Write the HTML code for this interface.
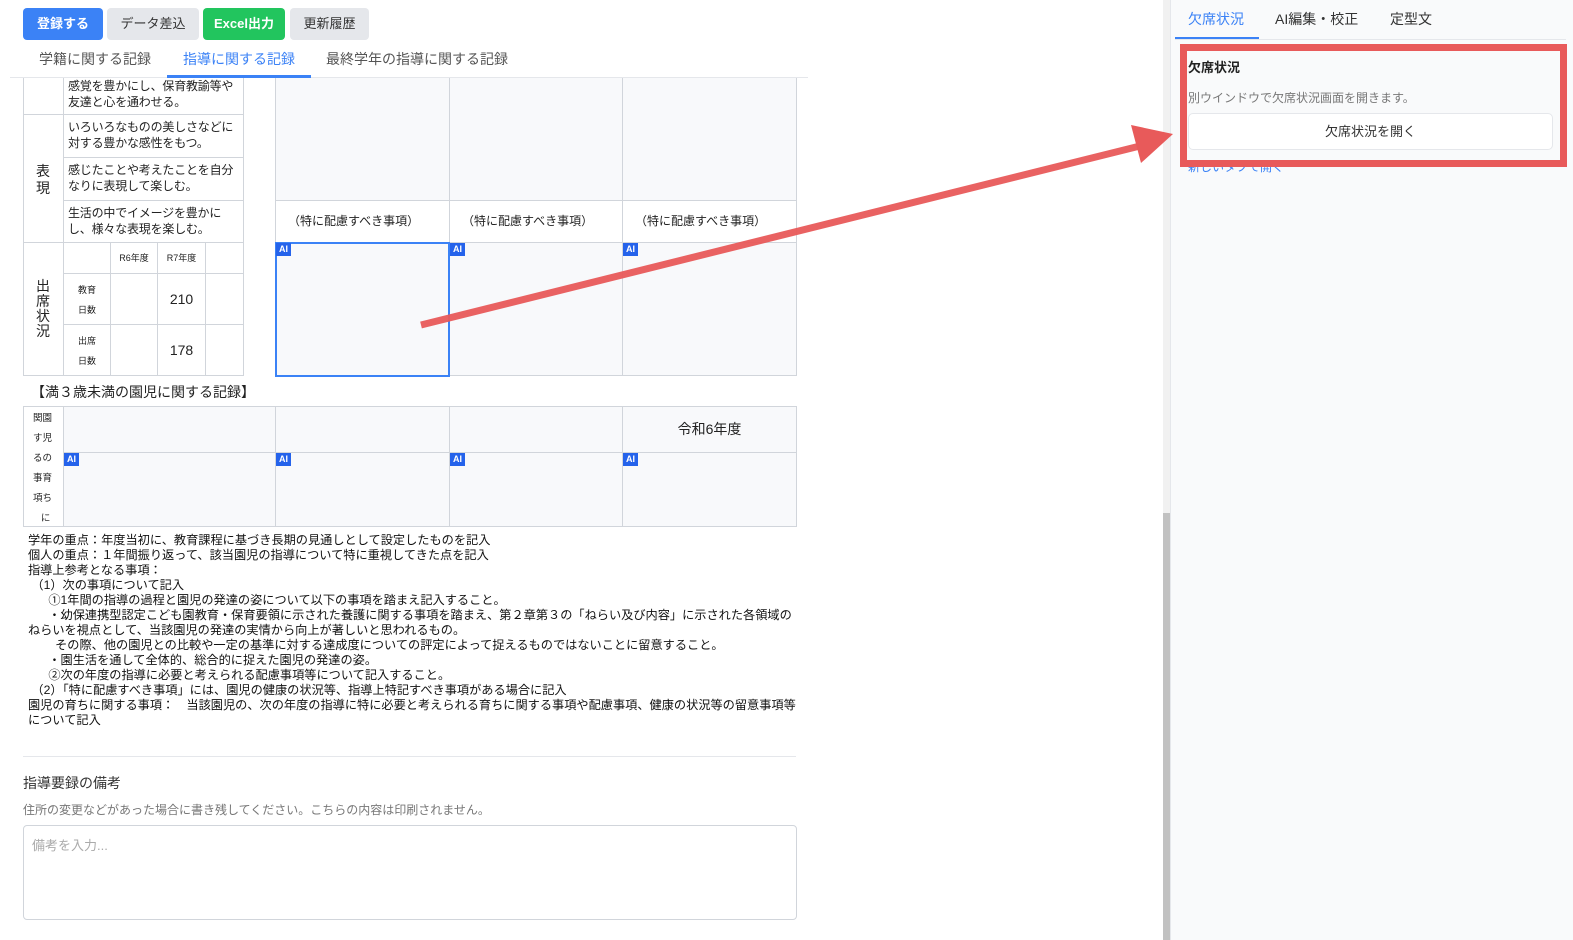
<!DOCTYPE html>
<html><head><meta charset="utf-8"><style>
*{box-sizing:border-box;margin:0;padding:0}
body{width:1573px;height:940px;position:relative;overflow:hidden;background:#fff;font-family:"Liberation Sans","Noto Sans CJK JP",sans-serif;color:#222}
.a{position:absolute}
.btn{position:absolute;top:8px;height:32px;border-radius:4px;font-size:13px;line-height:32px;text-align:center;font-weight:bold}
.c{position:absolute;border:1px solid #d1d5db}
.bg{background:#f8f9fb}
.ai{position:absolute;width:15px;height:13px;background:#2563eb;color:#fff;font-size:9px;font-weight:bold;line-height:13px;text-align:center}
.t{font-size:12px;line-height:16px;padding:4px 3px 3px 4px;letter-spacing:-0.2px}
.sm{font-size:9px}
.notes{position:absolute;left:28px;top:533px;font-size:12.2px;line-height:15px;white-space:pre;color:#111}
</style></head><body>
<div class="btn" style="left:23px;width:80px;background:#3b82f6;color:#fff">登録する</div>
<div class="btn" style="left:107px;width:92px;background:#e5e7eb;color:#333;font-weight:normal">データ差込</div>
<div class="btn" style="left:203px;width:82px;background:#22c55e;color:#fff">Excel出力</div>
<div class="btn" style="left:290px;width:79px;background:#e5e7eb;color:#333;font-weight:normal">更新履歴</div>
<div class="a" style="left:39px;top:49px;font-size:14px;color:#555">学籍に関する記録</div>
<div class="a" style="left:183px;top:49px;font-size:14px;color:#3b82f6">指導に関する記録</div>
<div class="a" style="left:326px;top:49px;font-size:14px;color:#555">最終学年の指導に関する記録</div>
<div class="a" style="left:10px;top:77px;width:798px;height:1px;background:#e5e7eb"></div>
<div class="a" style="left:167px;top:75px;width:144px;height:3px;background:#3b82f6"></div>

<div class="c" style="left:23px;top:78px;width:41px;height:37px;border-top:none"></div>
<div class="c t" style="left:63px;top:78px;width:181px;height:37px;border-top:none;padding-top:0">感覚を豊かにし、保育教諭等や友達と心を通わせる。</div>
<div class="c" style="left:23px;top:114px;width:41px;height:129px;font-size:14px;line-height:17px;padding:48px 0 0 12px">表<br>現</div>
<div class="c t" style="left:63px;top:114px;width:181px;height:44px">いろいろなものの美しさなどに対する豊かな感性をもつ。</div>
<div class="c t" style="left:63px;top:157px;width:181px;height:44px">感じたことや考えたことを自分なりに表現して楽しむ。</div>
<div class="c t" style="left:63px;top:200px;width:181px;height:43px">生活の中でイメージを豊かにし、様々な表現を楽しむ。</div>
<div class="c" style="left:23px;top:242px;width:41px;height:134px;font-size:14px;line-height:15px;padding:36px 0 0 12px">出<br>席<br>状<br>況</div>
<div class="c" style="left:63px;top:242px;width:48px;height:32px"></div>
<div class="c sm" style="left:110px;top:242px;width:48px;height:32px;text-align:center;line-height:30px">R6年度</div>
<div class="c sm" style="left:157px;top:242px;width:49px;height:32px;text-align:center;line-height:30px">R7年度</div>
<div class="c" style="left:205px;top:242px;width:39px;height:32px"></div>
<div class="c sm" style="left:63px;top:273px;width:48px;height:52px;text-align:center;line-height:20px;padding-top:6px">教育<br>日数</div>
<div class="c" style="left:110px;top:273px;width:48px;height:52px"></div>
<div class="c" style="left:157px;top:273px;width:49px;height:52px;text-align:center;line-height:50px;font-size:14px">210</div>
<div class="c" style="left:205px;top:273px;width:39px;height:52px"></div>
<div class="c sm" style="left:63px;top:324px;width:48px;height:52px;text-align:center;line-height:20px;padding-top:6px">出席<br>日数</div>
<div class="c" style="left:110px;top:324px;width:48px;height:52px"></div>
<div class="c" style="left:157px;top:324px;width:49px;height:52px;text-align:center;line-height:50px;font-size:14px">178</div>
<div class="c" style="left:205px;top:324px;width:39px;height:52px"></div>

<div class="c bg" style="left:275px;top:78px;width:175px;height:123px;border-top:none"></div>
<div class="c bg" style="left:449px;top:78px;width:174px;height:123px;border-top:none"></div>
<div class="c bg" style="left:622px;top:78px;width:175px;height:123px;border-top:none"></div>
<div class="c" style="left:275px;top:200px;width:175px;height:43px;font-size:12px;line-height:41px;padding-left:12px">（特に配慮すべき事項）</div>
<div class="c" style="left:449px;top:200px;width:174px;height:43px;font-size:12px;line-height:41px;padding-left:12px">（特に配慮すべき事項）</div>
<div class="c" style="left:622px;top:200px;width:175px;height:43px;font-size:12px;line-height:41px;padding-left:12px">（特に配慮すべき事項）</div>
<div class="c bg" style="left:449px;top:242px;width:174px;height:134px"></div>
<div class="c bg" style="left:622px;top:242px;width:175px;height:134px"></div>
<div class="a bg" style="left:275px;top:242px;width:175px;height:135px;border:2px solid #3b82f6"></div>
<div class="ai" style="left:276px;top:243px">AI</div>
<div class="ai" style="left:450px;top:243px">AI</div>
<div class="ai" style="left:623px;top:243px">AI</div>

<div class="a" style="left:31px;top:382px;font-size:14px">【満３歳未満の園児に関する記録】</div>
<div class="c" style="left:23px;top:406px;width:41px;height:121px;font-size:9.5px;line-height:20px;padding:2px 0 0 9px">関園<br>す児<br>るの<br>事育<br>項ち<br>&nbsp;&nbsp;&nbsp;に</div>
<div class="c bg" style="left:63px;top:406px;width:213px;height:47px"></div>
<div class="c bg" style="left:275px;top:406px;width:175px;height:47px"></div>
<div class="c bg" style="left:449px;top:406px;width:174px;height:47px"></div>
<div class="c bg" style="left:622px;top:406px;width:175px;height:47px;text-align:center;font-size:14px;line-height:45px">令和6年度</div>
<div class="c bg" style="left:63px;top:452px;width:213px;height:75px"></div>
<div class="c bg" style="left:275px;top:452px;width:175px;height:75px"></div>
<div class="c bg" style="left:449px;top:452px;width:174px;height:75px"></div>
<div class="c bg" style="left:622px;top:452px;width:175px;height:75px"></div>
<div class="ai" style="left:64px;top:453px">AI</div>
<div class="ai" style="left:276px;top:453px">AI</div>
<div class="ai" style="left:450px;top:453px">AI</div>
<div class="ai" style="left:623px;top:453px">AI</div>

<div class="notes">学年の重点：年度当初に、教育課程に基づき長期の見通しとして設定したものを記入
個人の重点：１年間振り返って、該当園児の指導について特に重視してきた点を記入
指導上参考となる事項：
 （1）次の事項について記入
      ①1年間の指導の過程と園児の発達の姿について以下の事項を踏まえ記入すること。
      ・幼保連携型認定こども園教育・保育要領に示された養護に関する事項を踏まえ、第２章第３の「ねらい及び内容」に示された各領域の
ねらいを視点として、当該園児の発達の実情から向上が著しいと思われるもの。
        その際、他の園児との比較や一定の基準に対する達成度についての評定によって捉えるものではないことに留意すること。
      ・園生活を通して全体的、総合的に捉えた園児の発達の姿。
      ②次の年度の指導に必要と考えられる配慮事項等について記入すること。
 （2）「特に配慮すべき事項」には、園児の健康の状況等、指導上特記すべき事項がある場合に記入
園児の育ちに関する事項：　当該園児の、次の年度の指導に特に必要と考えられる育ちに関する事項や配慮事項、健康の状況等の留意事項等
について記入</div>

<div class="a" style="left:23px;top:756px;width:773px;height:1px;background:#e5e7eb"></div>
<div class="a" style="left:23px;top:773px;font-size:14px;color:#333">指導要録の備考</div>
<div class="a" style="left:23px;top:801px;font-size:12px;color:#777">住所の変更などがあった場合に書き残してください。こちらの内容は印刷されません。</div>
<div class="a" style="left:23px;top:825px;width:774px;height:95px;border:1px solid #d1d5db;border-radius:4px;padding:9px 8px;font-size:13px;color:#aaa">備考を入力...</div>

<div class="a" style="left:1163px;top:0;width:7px;height:940px;background:#f1f1f1"></div>
<div class="a" style="left:1163px;top:513px;width:7px;height:427px;background:#c1c1c1"></div>
<div class="a" style="left:1170px;top:0;width:403px;height:940px;background:#f9fafb;border-left:1px solid #e5e7eb"></div>
<div class="a" style="left:1175px;top:39px;width:391px;height:1px;background:#e5e7eb"></div>
<div class="a" style="left:1175px;top:37px;width:84px;height:2px;background:#3b82f6"></div>
<div class="a" style="left:1188px;top:9px;font-size:14px;color:#3b82f6">欠席状況</div>
<div class="a" style="left:1275px;top:9px;font-size:14px;color:#333">AI編集・校正</div>
<div class="a" style="left:1390px;top:9px;font-size:14px;color:#333">定型文</div>
<div class="a" style="left:1188px;top:57px;font-size:13px;font-weight:bold;color:#222">欠席状況</div>
<div class="a" style="left:1188px;top:89px;font-size:12px;color:#777">別ウインドウで欠席状況画面を開きます。</div>
<div class="a" style="left:1188px;top:113px;width:365px;height:37px;background:#fff;border:1px solid #e5e7eb;border-radius:5px;text-align:center;line-height:35px;font-size:13px;color:#333">欠席状況を開く</div>
<div class="a" style="left:1188px;top:158px;font-size:12px;color:#3b82f6">新しいタブで開く</div>
<div class="a" style="left:1180px;top:44px;width:387px;height:123px;border:7px solid #e85a5a"></div>

<svg class="a" style="left:0;top:0" width="1573" height="940">
<line x1="421" y1="325" x2="1140" y2="146" stroke="#e85a5a" stroke-width="7" stroke-opacity="0.95"/>
<polygon points="1131,125 1173,134 1141,163" fill="#e85a5a"/>
</svg>
</body></html>
